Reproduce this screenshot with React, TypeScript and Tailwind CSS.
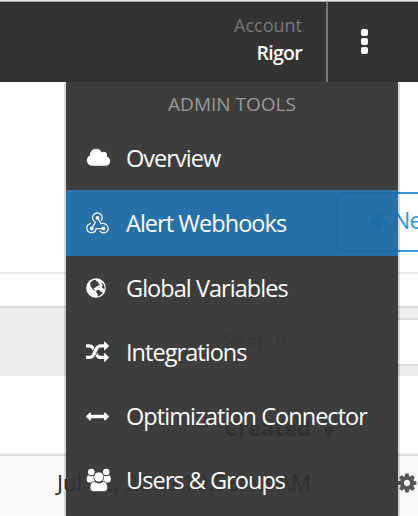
import React from "react";

type IconProps = { className?: string };

const CloudIcon = ({ className }: IconProps) => (
  <svg viewBox="0 0 2048 1792" className={className} fill="currentColor">
    <path d="M1984 1152q0 159-112.5 271.5t-271.5 112.5h-1088q-185 0-316.5-131.5t-131.5-316.5q0-132 71-241.5t187-163.5q-2-28-2-43 0-212 150-362t362-150q158 0 286.5 88t187.5 230q70-62 166-62 106 0 181 75t75 181q0 75-41 138 129 30 213 134.5t84 239.5z" />
  </svg>
);

const WebhookIcon = ({ className }: IconProps) => (
  <svg viewBox="0 0 24 24" className={className} fill="none" stroke="currentColor" strokeWidth="1.25" strokeLinecap="round">
    <path d="M8.3 9.3A4.9 4.9 0 1 1 16.2 8.2M8.3 9.3L9.7 10.8L6.5 16.3" />
    <path d="M12.3 6.4L15.7 12.3Q18 11.2 20.4 12.7A4.8 4.8 0 1 1 14.6 20" />
    <path d="M4.7 12.1A4.8 4.8 0 1 0 10.5 17.4H18" />
    <g fill="currentColor" stroke="none">
      <circle cx="12" cy="6.2" r="2" />
      <circle cx="5.9" cy="17.2" r="2" />
      <circle cx="18.2" cy="17.2" r="2" />
    </g>
  </svg>
);

const GlobeIcon = ({ className }: IconProps) => (
  <svg viewBox="0 0 20 20" className={className}>
    <circle cx="10" cy="10" r="9.8" fill="#fff" />
    <g fill="#3d3d3d">
      <path d="M4.6 4.2L7 2.3L9.2 1.7L10.4 2.4L9.6 3.4L11.4 3.2L12.6 4.2L12 5.2L13.6 6L13.8 7.2L12.2 7.4L11.4 8.2L10 8.8L9.2 10L7.8 9.8L7.6 11L8.8 11.6L9.4 12.8L8.2 12.3L6.6 11.4L5.8 10L4.6 8.4L4.2 6.2Z" />
      <path d="M10.2 12.4L12 11.8L13.6 12.2L14.6 13.4L16.8 14L16 15.8L14.4 17.2L12.2 18.4L11.4 17.8L11.8 16.2L10.4 14.6Z" />
      <path d="M15.8 4.2L17.6 6.2L18.7 9L18.4 11.2L17.4 10.4L16.2 9.8L16 8.2L17 7.2L15.6 5.8Z" />
    </g>
  </svg>
);

const ShuffleIcon = ({ className }: IconProps) => (
  <svg viewBox="0 0 1792 1792" className={className} fill="currentColor">
    <path d="M666 481q-60 92-137 273-22-45-37-72.5t-40.5-63.5-51-56.5-63-35-81.5-14.5h-224q-14 0-23-9t-9-23v-192q0-14 9-23t23-9h224q250 0 410 225zm1126 799q0 14-9 23l-320 320q-9 9-23 9-13 0-22.5-9.5t-9.5-22.5v-192q-32 0-85 .5t-81 1-73-1-71-5-64-10.5-63-18.5-58-28.5-59-40-55-53.5-56-69.5q59-93 136-273 22 45 37 72.5t40.5 63.5 51 56.5 63 35 81.5 14.5h256v-192q0-14 9-23t23-9q12 0 24 10l319 319q9 9 9 23zm0-896q0 14-9 23l-320 320q-9 9-23 9-13 0-22.5-9.5t-9.5-22.5v-192h-256q-48 0-87 15t-69 45-51 61.5-45 77.5q-32 62-78 171-29 66-49.5 111t-54 105-64 100-74 83-90 68.5-106.5 42-128 16.5h-224q-14 0-23-9t-9-23v-192q0-14 9-23t23-9h224q48 0 87-15t69-45 51-61.5 45-77.5q32-62 78-171 29-66 49.5-111t54-105 64-100 74-83 90-68.5 106.5-42 128-16.5h256v-192q0-14 9-23t23-9q12 0 24 10l319 319q9 9 9 23z" />
  </svg>
);

const ArrowsIcon = ({ className }: IconProps) => (
  <svg viewBox="0 0 1792 1792" className={className} fill="currentColor">
    <path d="M1792 896q0 26-19 45l-256 256q-19 19-45 19t-45-19-19-45v-128h-1024v128q0 26-19 45t-45 19-45-19l-256-256q-19-19-19-45t19-45l256-256q19-19 45-19t45 19 19 45v128h1024v-128q0-26 19-45t45-19 45 19l256 256q19 19 19 45z" />
  </svg>
);

const UsersIcon = ({ className }: IconProps) => (
  <svg viewBox="0 0 26 24" className={className}>
    <g fill="#fff">
      <circle cx="5.3" cy="4" r="3.3" />
      <circle cx="20.2" cy="4" r="3.3" />
      <path d="M2 7.2Q5 9 8.2 7.8Q7.2 11 9 13.2Q7 13.3 5.8 14.5H3Q.7 14.3.7 11.8Q.7 8 2 7.2Z" />
      <path d="M23.6 7.2Q20.6 9 17.4 7.8Q18.4 11 16.6 13.2Q18.6 13.3 19.8 14.5H22.6Q24.9 14.3 24.9 11.8Q24.9 8 23.6 7.2Z" />
    </g>
    <g fill="#fff" stroke="#3d3d3d" strokeWidth="0.7">
      <path d="M8.4 13.4Q12.8 16.7 17.2 13.4Q21.5 13.5 21.6 19.8Q21.6 23.6 18 23.6H7.5Q4 23.6 4 19.8Q4.1 13.5 8.4 13.4Z" />
      <circle cx="12.8" cy="9" r="5" />
    </g>
  </svg>
);

const GearIcon = ({ className }: IconProps) => (
  <svg viewBox="0 0 1792 1792" className={className} fill="currentColor">
    <path d="M1152 896q0-106-75-181t-181-75-181 75-75 181 75 181 181 75 181-75 75-181zm512-109v222q0 12-8 23t-20 13l-185 28q-19 54-39 91 35 50 107 138 10 12 10 25t-9 23q-27 37-99 108t-94 71q-12 0-26-9l-138-108q-44 23-91 38-16 136-29 186-7 28-36 28h-222q-14 0-24.5-8.5t-11.5-21.5l-28-184q-49-16-90-37l-141 107q-10 9-25 9-14 0-25-11-126-114-165-168-7-10-7-23 0-12 8-23 15-21 51-66.5t54-70.5q-27-50-41-99l-183-27q-13-2-21-12.5t-8-23.5v-222q0-12 8-23t19-13l186-28q14-46 39-92-40-57-107-138-10-12-10-24 0-10 9-23 26-36 98.5-107.5t94.5-71.5q13 0 26 10l138 107q44-23 91-38 16-136 29-186 7-28 36-28h222q14 0 24.5 8.5t11.5 21.5l28 184q49 16 90 37l142-107q9-9 24-9 13 0 25 10 129 119 165 170 7 8 7 22 0 12-8 23-15 21-51 66.5t-54 70.5q26 50 41 98l183 28q13 2 21 12.5t8 23.5z" />
  </svg>
);

const PlusIcon = ({ className }: IconProps) => (
  <svg viewBox="0 0 18 18" className={className} fill="currentColor">
    <path d="M7 0h4q.8 0 .8.8V6.2h5.4q.8 0 .8.8v4q0 .8-.8.8h-5.4v5.4q0 .8-.8.8H7q-.8 0-.8-.8v-5.4H.8q-.8 0-.8-.8V7q0-.8.8-.8h5.4V.8Q6.2 0 7 0Z" />
  </svg>
);

const items = [
  { label: "Overview", Icon: CloudIcon, icon: "h-[22px] w-[25px]", active: false },
  { label: "Alert Webhooks", Icon: WebhookIcon, icon: "h-[23px] w-[23px]", active: true },
  { label: "Global Variables", Icon: GlobeIcon, icon: "h-5 w-5", active: false },
  { label: "Integrations", Icon: ShuffleIcon, icon: "h-[23px] w-[23px]", active: false },
  { label: "Optimization Connector", Icon: ArrowsIcon, icon: "h-[23px] w-[23px]", active: false },
  { label: "Users & Groups", Icon: UsersIcon, icon: "h-6 w-[26px]", active: false },
];

function AdminMenu() {
  return (
    <nav className="absolute left-16 top-[82px] flex h-[434px] w-[336px] flex-col rounded-t-[3px] border-x-2 border-black/15 text-white">
      <h2 className="h-11 shrink-0 bg-[#333]/95 pt-2 text-center text-[19px] leading-7 text-[#999]">ADMIN TOOLS</h2>
      {items.map(({ label, Icon, icon, active }) => (
        <a
          key={label}
          className={`flex shrink-0 items-center ${active ? "h-[66px] bg-[#1b69a5]/95" : "h-16 bg-[#333]/95"}`}
        >
          <span className="ml-5 flex w-[26px] shrink-0">
            <Icon className={`shrink-0 ${icon}`} />
          </span>
          <span className={`ml-[14px] whitespace-nowrap text-[23.5px] leading-8 tracking-[-0.96px] ${active ? "" : "pb-px"}`}>{label}</span>
        </a>
      ))}
      <div className="flex-1 bg-[#333]/95" />
    </nav>
  );
}

export default function App() {
  return (
    <div className="relative flex h-[516px] w-[418px] flex-col overflow-hidden bg-white font-['Open_Sans',sans-serif]">
      <header className="flex h-[82px] shrink-0 border-t border-[#e6eeee] bg-[#333]">
        <div className="flex w-[328px] flex-col items-end border-r-2 border-t border-r-[#777] border-t-[#aaa] pr-6 pt-[9px]">
          <span className="text-[18px] leading-7 text-[#777]">Account</span>
          <span className="text-[19.5px] font-semibold leading-7 tracking-[-0.7px] text-white">Rigor</span>
        </div>
        <div className="flex flex-1 flex-col items-center gap-[2px] border-t border-[#aaa] pr-[18px] pt-[27px]">
          <i className="h-[7px] w-[7px] rounded-[2px] bg-white" />
          <i className="h-[7px] w-[7px] rounded-[2px] bg-white" />
          <i className="h-[7px] w-[7px] rounded-[2px] bg-white" />
        </div>
      </header>
      <section className="h-[192px] shrink-0 border-b-2 border-[#eee] pl-[336px] pt-[110px]">
        <button className="flex h-[60px] w-[130px] items-center rounded-md border-2 border-[#3498db] pb-1 pl-8 text-[23px] tracking-[-0.8px] text-[#3498db]">
          <PlusIcon className="mt-[3px] h-[18px] w-[18px]" />
          <span className="ml-[5px]">New</span>
        </button>
      </section>
      <div className="h-8 shrink-0" />
      <section className="h-[70px] shrink-0 border-t-2 border-[#ddd] bg-[#eee] pl-[204px] pt-[10px]">
        <div className="h-12 w-[240px] border-y-2 border-[#ddd] bg-white pl-5 text-[20px] leading-[42px] text-[#888]">Search</div>
      </section>
      <section className="flex h-20 shrink-0 border-b-2 border-[#ddd] pl-[224px] pt-8 text-[22px] font-bold leading-[38px] text-[#333]">
        <span>Created</span>
        <span className="ml-3 mt-[19px] h-0 w-0 border-x-[6px] border-t-[11px] border-x-transparent border-t-[#447]" />
      </section>
      <section className="flex h-[58px] shrink-0 items-center bg-[#f9f9f9] pb-1 pl-[57px] text-[#222]">
        <span className="w-[345px] whitespace-nowrap text-[22.4px] leading-8">Jul 12, 2016 10:58:13 AM</span>
        <GearIcon className="h-[22px] w-[22px] shrink-0 text-[#555]" />
      </section>
      <AdminMenu />
    </div>
  );
}
